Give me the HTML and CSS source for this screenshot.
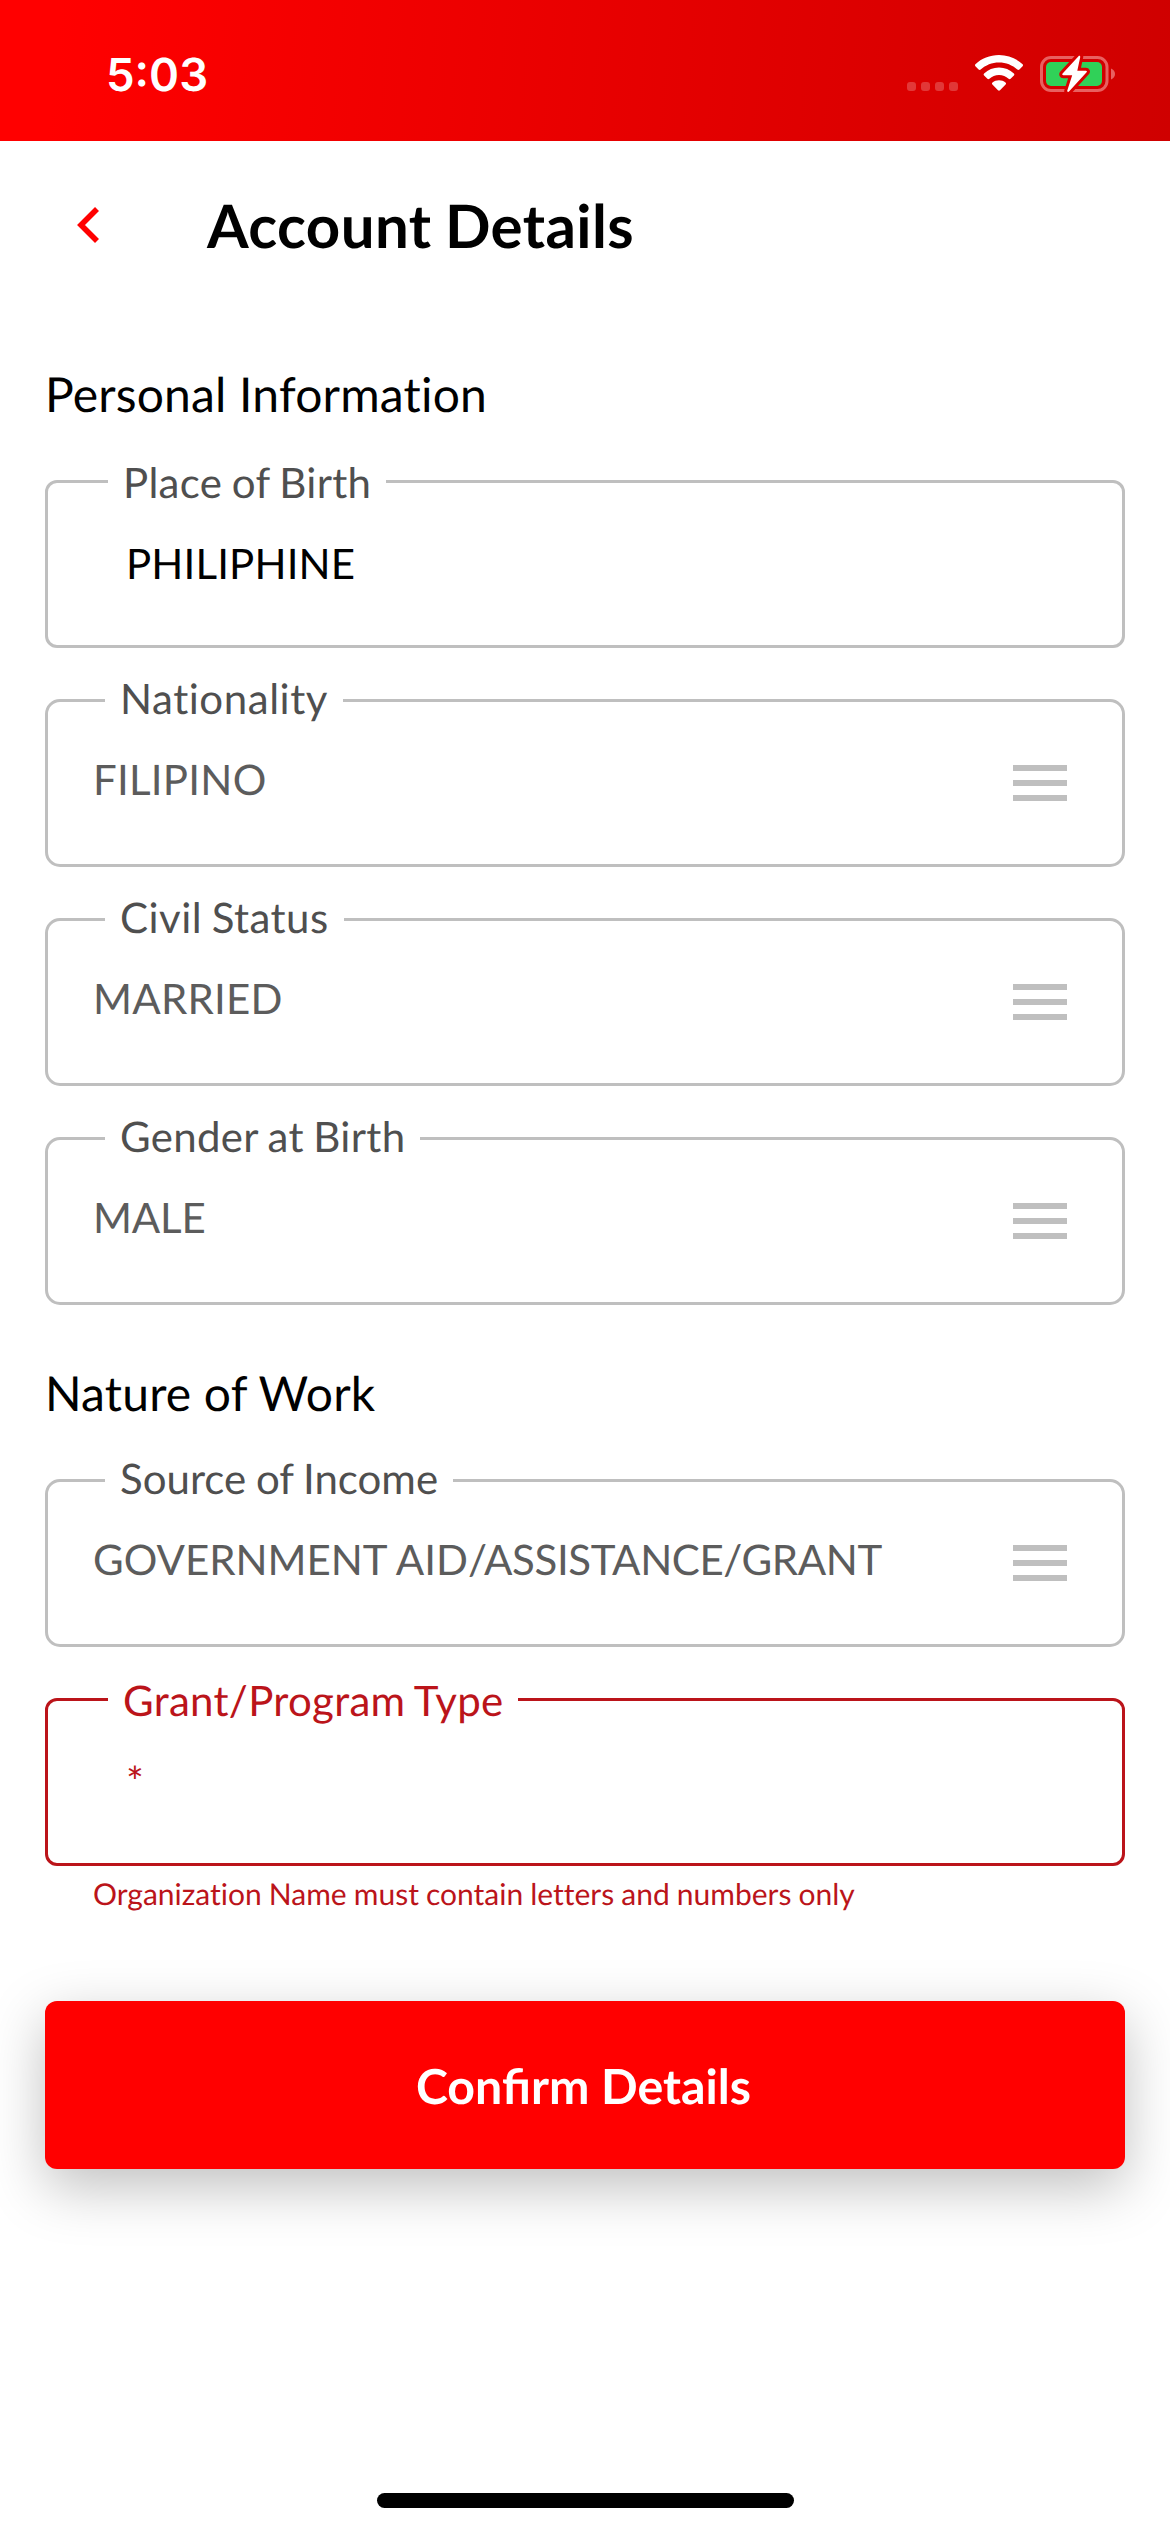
FILE: index.html
```html
<!DOCTYPE html>
<html lang="en">
<head>
<meta charset="utf-8">
<title>Account Details</title>
<link rel="stylesheet" href="styles.css">
</head>
<body>
<div class="screen">
  <header class="status-bar">
    <span class="clock">5:03</span>
    <div class="status-icons">
      <div class="signal"><i></i><i></i><i></i><i></i></div>
      <svg class="wifi" width="48" height="36" viewBox="0 0 48 36" fill="#fff">
        <path d="M24 0C33.200 0 41.500 3.500 47.600 9.200c.6.600.6 1.500 0 2.100l-3.200 3.200c-.6.600-1.500.6-2.100 0C37.500 10 31 7.400 24 7.400S10.500 10 5.700 14.500c-.6.600-1.500.6-2.100 0L.4 11.300c-.6-.6-.6-1.500 0-2.100C6.500 3.500 14.800 0 24 0z"/>
        <path d="M24 12.600c5.700 0 10.900 2.200 14.900 5.800.6.600.6 1.500 0 2.100l-3.300 3.300c-.6.500-1.400.5-2 0C31 21.500 27.700 20 24 20s-7 1.500-9.600 3.800c-.6.500-1.400.5-2 0l-3.300-3.300c-.6-.6-.6-1.500 0-2.100 4-3.600 9.200-5.800 14.900-5.800z"/>
        <path d="M24 25.200c2.500 0 4.700.9 6.500 2.300.7.600.7 1.500.1 2.100L25 35.300c-.6.600-1.400.6-2 0l-5.600-5.700c-.6-.6-.6-1.500.1-2.100 1.800-1.400 4-2.300 6.500-2.300z"/>
      </svg>
      <svg class="battery" width="76" height="40" viewBox="0 0 76 40">
        <rect x="1.500" y="3.500" width="65.500" height="33" rx="9.500" fill="none" stroke="#e86060" stroke-width="3"/>
        <rect x="6" y="8" width="56" height="24" rx="5" fill="#30d158"/>
        <path d="M71 14.500c2.600 1 4 3 4 5.500s-1.400 4.500-4 5.500z" fill="#e86060"/>
        <path d="M38.500 2.200L22.600 19.600c-.7.800-.3 1.700.7 1.700h8.900L27.300 36.600c-.4 1.300.9 1.900 1.700 1L46.600 18.300c.7-.8.3-1.600-.7-1.600h-8.600L40.200 3.200c.3-1.300-.8-1.900-1.700-1z" fill="#fff" stroke="#d80000" stroke-width="6" stroke-linejoin="round" paint-order="stroke"/>
      </svg>
    </div>
  </header>

  <nav class="nav">
    <svg class="back" width="22" height="36" viewBox="0 0 22 36"><path d="M20 2L4 18L20 34" fill="none" stroke="#f00" stroke-width="5.600"/></svg>
    <h1 class="title">Account Details</h1>
  </nav>

  <main class="content">
    <h2 class="section-title">Personal Information</h2>
    <div class="fields">
      <div class="field input"><span class="label">Place of Birth</span><span class="value">PHILIPHINE</span></div>
      <div class="field select"><span class="label wider">Nationality</span><span class="value">FILIPINO</span><span class="menu"></span></div>
      <div class="field select"><span class="label wide">Civil Status</span><span class="value">MARRIED</span><span class="menu"></span></div>
      <div class="field select"><span class="label">Gender at Birth</span><span class="value snug">MALE</span><span class="menu"></span></div>
    </div>
    <h2 class="section-title work">Nature of Work</h2>
    <div class="fields">
      <div class="field select"><span class="label snug">Source of Income</span><span class="value plain">GOVERNMENT AID<span class="tight">/ASSISTANCE/GRANT</span></span><span class="menu"></span></div>
      <div class="field input error"><span class="label">Grant/Program Type</span><span class="value required">*</span></div>
    </div>
    <p class="error-text">Organization Name must contain letters and numbers only</p>
    <button class="confirm" type="button">Confirm Details</button>
  </main>

  <div class="home-indicator"></div>
</div>
</body>
</html>
```
FILE: styles.css
```css
* { box-sizing: border-box; }

body {
  margin: 0;
  background: #fff;
  font-family: Lato, sans-serif;
  font-variant-ligatures: none;
  text-rendering: geometricPrecision;
  color: #000;
}

.screen {
  display: flex;
  flex-direction: column;
  width: 1170px;
  height: 2532px;
  overflow: hidden;
}

.status-bar {
  display: flex;
  justify-content: space-between;
  height: 141px;
  padding: 0 54px 0 106px;
  background: linear-gradient(95deg, #f00 5%, #cf0000 100%);
}

.clock {
  margin-top: 47px;
  font: 600 45.500px/56px Inter, sans-serif;
  color: #fff;
}

.status-icons {
  display: flex;
  align-items: flex-start;
}

.signal {
  display: flex;
  gap: 5px;
  margin: 82px 17px 0 0;
}

.signal i {
  width: 9px;
  height: 9px;
  border-radius: 3px;
  background: rgba(255, 255, 255, 0.22);
}

.wifi { margin: 55px 17px 0 0; }
.battery { margin-top: 54px; }

.nav {
  display: flex;
  align-items: center;
  gap: 108px;
  height: 168px;
  padding-left: 77px;
}

.title {
  margin: 0;
  font-size: 60px;
  line-height: 72px;
  font-weight: 700;
  letter-spacing: 0.4px;
  word-spacing: -1.5px;
}

.content { padding: 56px 45px 0; }

.section-title {
  margin: 0 0 55px;
  font-size: 48px;
  line-height: 60px;
  font-weight: 400;
  letter-spacing: 0.18px;
}

.section-title.work { margin-top: 59px; }

.fields {
  display: flex;
  flex-direction: column;
  gap: 51px;
}

.field {
  position: relative;
  display: flex;
  align-items: center;
  justify-content: space-between;
  height: 168px;
  border: 3px solid #bfbfbf;
  border-radius: 15px;
  font-size: 42px;
  line-height: 50px;
}

.label {
  position: absolute;
  left: 57px;
  top: -22px;
  padding: 0 15px;
  background: #fff;
  line-height: 36px;
  color: #4f4f4f;
  letter-spacing: 0.3px;
  word-spacing: -1.5px;
  white-space: nowrap;
}

.value { letter-spacing: 0.25px; }

.label.wide { letter-spacing: 0.45px; }
.label.wider { letter-spacing: 0.55px; }
.label.snug { letter-spacing: 0; word-spacing: -1px; }
.value.snug { letter-spacing: -0.2px; }
.value.plain { letter-spacing: 0; }
.tight { letter-spacing: -0.4px; }

.select { padding: 0 55px 0 45px; }

.select .value {
  padding-bottom: 9px;
  color: #5c5c5c;
}

.input {
  padding-left: 78px;
  border-radius: 12px;
}

.input .label {
  left: 60px;
  top: -19px;
}

.input .value {
  padding-bottom: 3px;
  letter-spacing: 0.15px;
}

.menu {
  width: 54px;
  height: 36px;
  border: solid #bfbfbf;
  border-width: 6px 0;
  background: linear-gradient(#bfbfbf, #bfbfbf) center / 54px 6px no-repeat;
}

.error { border-color: #bb141a; }
.error .label,
.error .value { color: #bb141a; }

.error-text {
  margin: 10px 0 89px 48px;
  font-size: 30px;
  line-height: 36px;
  word-spacing: -0.6px;
  color: #bb141a;
}

.confirm {
  display: block;
  width: 100%;
  height: 168px;
  padding: 2px 3px 0 0;
  border: 0;
  border-radius: 12px;
  background: #f00;
  box-shadow: 0 18px 56px rgba(0, 0, 0, 0.25);
  font: 700 48.300px/58px Lato, sans-serif;
  font-variant-ligatures: normal;
  text-rendering: geometricPrecision;
  color: #fff;
}

.home-indicator {
  width: 417px;
  height: 15px;
  margin: auto auto 24px 377px;
  border-radius: 8px;
  background: #000;
}
```
